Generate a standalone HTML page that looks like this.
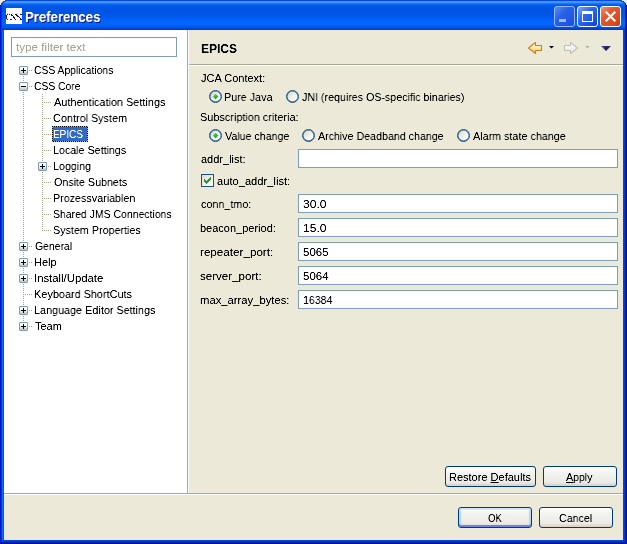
<!DOCTYPE html>
<html><head><meta charset="utf-8">
<style>
*{margin:0;padding:0;box-sizing:border-box}
html,body{width:627px;height:544px;overflow:hidden;background:#ECE9D8}
body{position:relative;font-family:"Liberation Sans",sans-serif;font-size:11px;color:#000}
.a{position:absolute}
.t{position:absolute;white-space:nowrap;line-height:13px;font-size:11px;will-change:transform;filter:url(#dk)}
.t u{text-decoration:underline}
#win{left:0;top:0;width:627px;height:544px;overflow:hidden;background:#0831D9}
#title{left:0;top:0;width:627px;height:30px;background:linear-gradient(180deg,#0A48DC 0px,#0A48DC 1px,#3D95FF 1px,#3D95FF 2px,#3D95FF 2px,#3D95FF 3px,#1478FF 3px,#1478FF 4px,#0466F4 4px,#0466F4 5px,#005AE8 5px,#005AE8 6px,#0057E6 6px,#0057E6 7px,#0055E5 7px,#0055E5 8px,#0055E5 8px,#0055E5 9px,#0055E5 9px,#0055E5 10px,#0055E5 10px,#0055E5 11px,#0055E5 11px,#0055E5 12px,#0055E5 12px,#0055E5 13px,#0055E6 13px,#0055E6 14px,#0056E7 14px,#0056E7 15px,#0057E8 15px,#0057E8 16px,#0058EA 16px,#0058EA 17px,#005AED 17px,#005AED 18px,#005DF2 18px,#005DF2 19px,#0061F8 19px,#0061F8 20px,#0064FC 20px,#0064FC 21px,#0065FF 21px,#0065FF 22px,#0065FF 22px,#0065FF 23px,#0065FF 23px,#0065FF 24px,#0064FD 24px,#0064FD 25px,#0060F8 25px,#0060F8 26px,#0059EE 26px,#0059EE 27px,#0051E4 27px,#0051E4 28px,#0047D8 28px,#0047D8 29px,#003DCA 29px,#003DCA 30px)}
.exp{position:absolute;width:9px;height:9px;border:1px solid #7B9EBD;border-radius:1px;background:linear-gradient(180deg,#fff 0%,#fff 35%,#C9C3AE 100%)}
.exp .h{position:absolute;left:1px;top:3px;width:5px;height:1px;background:#000}
.exp .v{position:absolute;left:3px;top:1px;width:1px;height:5px;background:#000}
.vd{position:absolute;width:1px;background:repeating-linear-gradient(180deg,#A7A38F 0 1px,transparent 1px 2px)}
.hd{position:absolute;height:1px;background:repeating-linear-gradient(90deg,#A7A38F 0 1px,transparent 1px 2px)}
.radio{position:absolute;width:13px;height:13px;border-radius:50%;border:1px solid #1C5180;box-shadow:inset 0 0 0 .4px #1C5180;background:linear-gradient(135deg,#D4D4CC 0%,#F0F0EA 50%,#FFFFFF 100%)}
.radio svg{position:absolute;left:-1px;top:-1px}
.chk{position:absolute;width:13px;height:13px;border:1px solid #1C5180;background:linear-gradient(135deg,#DCDCD7 0%,#FFFFFF 100%)}
.chk svg{position:absolute;left:0;top:0}
.tb{position:absolute;left:298px;width:320px;height:19px;border:1px solid #7F9DB9;background:#fff}
.btn{position:absolute;height:21px;border:1px solid #003C74;border-radius:3px;background:linear-gradient(180deg,#FFFFFF 0%,#F3F3EF 30%,#ECEBE6 80%,#D6D0C5 100%)}
.btn.def{box-shadow:inset 0 2px #CEE7FF,inset 0 -2px #6982EE,inset 2px 0 #B6D7FC,inset -2px 0 #B6D7FC}
</style></head><body>
<svg width="0" height="0" style="position:absolute"><filter id="dk" x="-5%" y="-20%" width="110%" height="140%"><feComponentTransfer><feFuncA type="table" tableValues="0 0.1 0.6 1 1"/></feComponentTransfer></filter></svg>
<div id="win" class="a">
 <div id="title" class="a"></div>
 <div class="a" style="left:0;top:5px;width:1px;height:539px;background:#0019CF"></div>
 <div class="a" style="left:1px;top:3px;width:1px;height:541px;background:#0831D9"></div>
 <div class="a" style="left:2px;top:30px;width:1px;height:514px;background:#166AEE"></div>
 <div class="a" style="left:3px;top:30px;width:1px;height:510px;background:#0855DD"></div>
 <div class="a" style="left:623px;top:30px;width:1px;height:510px;background:#0044EE"></div>
 <div class="a" style="left:624px;top:30px;width:1px;height:511px;background:#003BDA"></div>
 <div class="a" style="left:625px;top:3px;width:1px;height:539px;background:#001EA0"></div>
 <div class="a" style="left:626px;top:5px;width:1px;height:539px;background:#00138C"></div>
 <div class="a" style="left:3px;top:540px;width:620px;height:1px;background:#0046E0"></div>
 <div class="a" style="left:2px;top:541px;width:622px;height:1px;background:#003BDA"></div>
 <div class="a" style="left:1px;top:542px;width:624px;height:1px;background:#001EA0"></div>
 <div class="a" style="left:0;top:543px;width:626px;height:1px;background:#00138C"></div>
 <div class="a" style="left:4px;top:30px;width:619px;height:510px;background:#ECE9D8"></div>
</div>


<!-- rounded corners -->
<div class="a" style="left:0;top:0;width:5px;height:1px;background:#ECE9D8"></div>
<div class="a" style="left:0;top:1px;width:3px;height:1px;background:#ECE9D8"></div>
<div class="a" style="left:0;top:2px;width:2px;height:1px;background:#ECE9D8"></div>
<div class="a" style="left:0;top:3px;width:1px;height:2px;background:#ECE9D8"></div>
<div class="a" style="left:622px;top:0;width:5px;height:1px;background:#ECE9D8"></div>
<div class="a" style="left:624px;top:1px;width:3px;height:1px;background:#ECE9D8"></div>
<div class="a" style="left:625px;top:2px;width:2px;height:1px;background:#ECE9D8"></div>
<div class="a" style="left:626px;top:3px;width:1px;height:2px;background:#ECE9D8"></div>
<div class="a" style="left:3px;top:1px;width:3px;height:1px;background:#0A4ADE"></div>
<div class="a" style="left:2px;top:2px;width:2px;height:1px;background:#0A4ADE"></div>
<div class="a" style="left:1px;top:3px;width:2px;height:1px;background:#0A44DA"></div>
<div class="a" style="left:621px;top:1px;width:3px;height:1px;background:#0A4ADE"></div>
<div class="a" style="left:623px;top:2px;width:2px;height:1px;background:#0A4ADE"></div>
<div class="a" style="left:624px;top:3px;width:2px;height:1px;background:#0A44DA"></div>
<!-- title icon -->
<div class="a" style="left:6px;top:8px;width:16px;height:16px;background:#fff"><svg width="16" height="16" style="position:absolute;left:0;top:0"><g fill="#E4E4EC"><rect x="1" y="5" width="1" height="1"/><rect x="2" y="5" width="1" height="1"/><rect x="3" y="5" width="1" height="1"/><rect x="5" y="5" width="1" height="1"/><rect x="6" y="5" width="1" height="1"/><rect x="7" y="5" width="1" height="1"/><rect x="9" y="5" width="1" height="1"/><rect x="10" y="5" width="1" height="1"/><rect x="11" y="5" width="1" height="1"/><rect x="12" y="5" width="1" height="1"/></g><g fill="#1C1060"><rect x="1" y="6" width="1" height="1"/><rect x="3" y="6" width="1" height="1"/><rect x="5" y="6" width="1" height="1"/><rect x="9" y="6" width="1" height="1"/><rect x="10" y="6" width="1" height="1"/><rect x="14" y="6" width="1" height="1"/><rect x="15" y="6" width="1" height="1"/><rect x="0" y="7" width="1" height="1"/><rect x="5" y="7" width="1" height="1"/><rect x="6" y="7" width="1" height="1"/><rect x="10" y="7" width="1" height="1"/><rect x="11" y="7" width="1" height="1"/><rect x="0" y="8" width="1" height="1"/><rect x="7" y="8" width="1" height="1"/><rect x="11" y="8" width="1" height="1"/><rect x="12" y="8" width="1" height="1"/><rect x="0" y="9" width="1" height="1"/><rect x="7" y="9" width="1" height="1"/><rect x="8" y="9" width="1" height="1"/><rect x="13" y="9" width="1" height="1"/><rect x="0" y="10" width="1" height="1"/><rect x="8" y="10" width="1" height="1"/><rect x="14" y="10" width="1" height="1"/><rect x="1" y="11" width="1" height="1"/><rect x="4" y="11" width="1" height="1"/><rect x="5" y="11" width="1" height="1"/><rect x="9" y="11" width="1" height="1"/><rect x="14" y="11" width="1" height="1"/><rect x="15" y="11" width="1" height="1"/></g></svg></div>
<div class="a" style="left:25px;top:9px;font-size:14px;font-weight:bold;color:#fff;line-height:16px;text-shadow:1px 1px #0A1883;transform:scaleX(0.94);transform-origin:0 0;white-space:nowrap;will-change:transform;filter:url(#dk)">Preferences</div>

<!-- title buttons -->
<div class="a" style="left:554px;top:6px;width:21px;height:21px;border:1px solid #9CB4F0;border-radius:3px;background:linear-gradient(135deg,#5C8CF0,#2660E8 40%,#1A50E0)"></div>
<div class="a" style="left:559px;top:19px;width:7px;height:3px;background:#A7B5F5"></div>
<div class="a" style="left:577px;top:6px;width:21px;height:21px;border:1px solid #fff;border-radius:3px;background:linear-gradient(135deg,#7EA2F8,#2E68F0 40%,#1650E8 80%,#0D3FCC)"></div>
<div class="a" style="left:582px;top:11px;width:11px;height:11px;border:1px solid #fff;border-top-width:3px"></div>
<div class="a" style="left:600px;top:6px;width:21px;height:21px;border:1px solid #fff;border-radius:3px;background:linear-gradient(135deg,#EE9478,#E05A33 35%,#D8491F 80%,#C23A10)"></div>
<svg class="a" style="left:600px;top:6px" width="21" height="21" viewBox="0 0 21 21"><path d="M6.5 6.5 L14.5 14.5 M14.5 6.5 L6.5 14.5" stroke="#fff" stroke-width="2.2" stroke-linecap="square"/></svg>

<!-- left tree pane -->
<div class="a" style="left:4px;top:30px;width:183px;height:463px;background:#fff"></div>
<div class="a" style="left:187px;top:30px;width:1px;height:464px;background:#ACA899"></div>
<div class="a" style="left:188px;top:30px;width:1px;height:463px;background:#fff"></div>
<div class="a" style="left:4px;top:493px;width:619px;height:1px;background:#ACA899"></div>
<div class="a" style="left:4px;top:494px;width:619px;height:1px;background:#fff"></div>
<div class="a" style="left:11px;top:37px;width:166px;height:20px;border:1px solid #7F9DB9;background:#fff"></div>

<!-- tree lines -->
<div class="vd" style="left:23px;top:76px;height:246px"></div>
<div class="vd" style="left:42px;top:94px;height:137px"></div>
<div class="exp" style="left:19px;top:66px"><i class="h"></i><i class="v"></i></div>
<div class="exp" style="left:19px;top:82px"><i class="h"></i></div>
<div class="exp" style="left:19px;top:242px"><i class="h"></i><i class="v"></i></div>
<div class="exp" style="left:19px;top:258px"><i class="h"></i><i class="v"></i></div>
<div class="exp" style="left:19px;top:274px"><i class="h"></i><i class="v"></i></div>
<div class="exp" style="left:19px;top:306px"><i class="h"></i><i class="v"></i></div>
<div class="exp" style="left:19px;top:322px"><i class="h"></i><i class="v"></i></div>
<div class="exp" style="left:38px;top:162px"><i class="h"></i><i class="v"></i></div>
<div class="hd" style="left:29px;top:70px;width:3px"></div>
<div class="hd" style="left:29px;top:86px;width:3px"></div>
<div class="hd" style="left:29px;top:246px;width:3px"></div>
<div class="hd" style="left:29px;top:262px;width:3px"></div>
<div class="hd" style="left:29px;top:278px;width:3px"></div>
<div class="hd" style="left:29px;top:310px;width:3px"></div>
<div class="hd" style="left:29px;top:326px;width:3px"></div>
<div class="hd" style="left:25px;top:294px;width:7px"></div>
<div class="hd" style="left:44px;top:102px;width:7px"></div>
<div class="hd" style="left:44px;top:118px;width:7px"></div>
<div class="hd" style="left:44px;top:134px;width:7px"></div>
<div class="hd" style="left:44px;top:150px;width:7px"></div>
<div class="hd" style="left:48px;top:166px;width:3px"></div>
<div class="hd" style="left:44px;top:182px;width:7px"></div>
<div class="hd" style="left:44px;top:198px;width:7px"></div>
<div class="hd" style="left:44px;top:214px;width:7px"></div>
<div class="hd" style="left:44px;top:230px;width:7px"></div>
<div class="a" style="left:52px;top:126px;width:36px;height:16px;background:#316AC5"></div>
<div class="a" style="left:52px;top:126px;width:36px;height:1px;background:repeating-linear-gradient(90deg,#000 0 1px,#F4A93A 1px 2px)"></div>
<div class="a" style="left:52px;top:141px;width:36px;height:1px;background:repeating-linear-gradient(90deg,#F4A93A 0 1px,#000 1px 2px)"></div>
<div class="a" style="left:52px;top:126px;width:1px;height:16px;background:repeating-linear-gradient(180deg,#000 0 1px,#F4A93A 1px 2px)"></div>
<div class="a" style="left:87px;top:126px;width:1px;height:16px;background:repeating-linear-gradient(180deg,#F4A93A 0 1px,#000 1px 2px)"></div>

<!-- right pane -->
<div class="a" style="left:189px;top:64px;width:434px;height:1px;background:#ACA899"></div>
<div class="a" style="left:189px;top:65px;width:434px;height:1px;background:#fff"></div>
<div class="a" style="left:201px;top:42px;font-size:12px;font-weight:bold;line-height:14px;white-space:nowrap;will-change:transform;filter:url(#dk)">EPICS</div>
<svg class="a" style="left:520px;top:36px" width="100" height="24" viewBox="0 0 100 24">
 <defs>
  <linearGradient id="gy" x1="0" y1="0" x2="0" y2="1"><stop offset="0" stop-color="#FFFBEA"/><stop offset="0.5" stop-color="#FCE6A8"/><stop offset="1" stop-color="#F2C050"/></linearGradient>
  <linearGradient id="gw" x1="0" y1="0" x2="0" y2="1"><stop offset="0" stop-color="#FFFFFF"/><stop offset="1" stop-color="#E4E4DC"/></linearGradient>
  <linearGradient id="gn" x1="0" y1="0" x2="1" y2="0"><stop offset="0" stop-color="#6A5ACD"/><stop offset="0.5" stop-color="#241C58"/><stop offset="1" stop-color="#3A3470"/></linearGradient>
 </defs>
 <path d="M8.5 12 L15.5 6.5 V9.5 H21.5 V14.5 H15.5 V17.5 Z" fill="url(#gy)" stroke="#C4861A" stroke-width="1.1" stroke-linejoin="round"/>
 <path d="M29 10 H34 L31.5 12.5 Z" fill="#000"/>
 <path d="M57.5 12 L50.5 6.5 V9.5 H44.5 V14.5 H50.5 V17.5 Z" fill="url(#gw)" stroke="#C2C2BA" stroke-width="1.1" stroke-linejoin="round"/>
 <path d="M65 10 H70 L67.5 12.5 Z" fill="#B8B8B0"/>
 <path d="M81 10 H91 L86 15 Z" fill="url(#gn)"/>
</svg>
<div class="radio on" style="left:209px;top:90px"><svg width="13" height="13"><defs><linearGradient id="gd" x1="0" y1="0" x2="1" y2="1"><stop offset="0" stop-color="#7AE474"/><stop offset=".5" stop-color="#32B830"/><stop offset="1" stop-color="#118C11"/></linearGradient></defs><path d="M6.5 4.1 L8.9 6.5 L6.5 8.9 L4.1 6.5 Z" fill="url(#gd)" stroke="url(#gd)" stroke-width=".8" stroke-linejoin="round"/></svg></div>
<div class="radio" style="left:286px;top:90px"></div>
<div class="radio on" style="left:209px;top:129px"><svg width="13" height="13"><defs><linearGradient id="gd2" x1="0" y1="0" x2="1" y2="1"><stop offset="0" stop-color="#7AE474"/><stop offset=".5" stop-color="#32B830"/><stop offset="1" stop-color="#118C11"/></linearGradient></defs><path d="M6.5 4.1 L8.9 6.5 L6.5 8.9 L4.1 6.5 Z" fill="url(#gd2)" stroke="url(#gd2)" stroke-width=".8" stroke-linejoin="round"/></svg></div>
<div class="radio" style="left:302px;top:129px"></div>
<div class="radio" style="left:457px;top:129px"></div>
<div class="tb" style="top:149px"></div>
<div class="chk" style="left:201px;top:174px"><svg width="11" height="11" fill="#21A121"><rect x="8" y="2" width="1" height="1"/><rect x="7" y="3" width="1" height="1"/><rect x="8" y="3" width="1" height="1"/><rect x="2" y="4" width="1" height="1"/><rect x="6" y="4" width="1" height="1"/><rect x="7" y="4" width="1" height="1"/><rect x="8" y="4" width="1" height="1"/><rect x="2" y="5" width="1" height="1"/><rect x="3" y="5" width="1" height="1"/><rect x="5" y="5" width="1" height="1"/><rect x="6" y="5" width="1" height="1"/><rect x="7" y="5" width="1" height="1"/><rect x="2" y="6" width="1" height="1"/><rect x="3" y="6" width="1" height="1"/><rect x="4" y="6" width="1" height="1"/><rect x="5" y="6" width="1" height="1"/><rect x="6" y="6" width="1" height="1"/><rect x="3" y="7" width="1" height="1"/><rect x="4" y="7" width="1" height="1"/><rect x="5" y="7" width="1" height="1"/><rect x="4" y="8" width="1" height="1"/></svg></div>
<div class="tb" style="top:194px"></div>
<div class="tb" style="top:218px"></div>
<div class="tb" style="top:242px"></div>
<div class="tb" style="top:266px"></div>
<div class="tb" style="top:290px"></div>
<div class="btn" style="left:445px;top:466px;width:91px"></div>
<div class="btn" style="left:543px;top:466px;width:74px"></div>
<div class="btn def" style="left:458px;top:507px;width:74px"></div>
<div class="btn" style="left:539px;top:507px;width:74px"></div>

<div class="t" style="left:34.06px;top:64px;transform:scaleX(0.9398);transform-origin:0 0;">CSS Applications</div>
<div class="t" style="left:34.06px;top:80px;transform:scaleX(0.9375);transform-origin:0 0;">CSS Core</div>
<div class="t" style="left:54.00px;top:96px;transform:scaleX(0.9911);transform-origin:0 0;">Authentication Settings</div>
<div class="t" style="left:53.01px;top:112px;transform:scaleX(0.9865);transform-origin:0 0;">Control System</div>
<div class="t" style="left:53.09px;top:128px;transform:scaleX(0.9062);transform-origin:0 0;color:#fff">EPICS</div>
<div class="t" style="left:53.03px;top:144px;transform:scaleX(0.9730);transform-origin:0 0;">Locale Settings</div>
<div class="t" style="left:53.03px;top:160px;transform:scaleX(0.9737);transform-origin:0 0;">Logging</div>
<div class="t" style="left:54.00px;top:176px;transform:scaleX(0.9733);transform-origin:0 0;">Onsite Subnets</div>
<div class="t" style="left:53.02px;top:192px;transform:scaleX(0.9759);transform-origin:0 0;">Prozessvariablen</div>
<div class="t" style="left:53.05px;top:208px;transform:scaleX(0.9516);transform-origin:0 0;">Shared JMS Connections</div>
<div class="t" style="left:53.02px;top:224px;transform:scaleX(0.9775);transform-origin:0 0;">System Properties</div>
<div class="t" style="left:35.00px;top:240px;transform:scaleX(0.9487);transform-origin:0 0;">General</div>
<div class="t" style="left:34.00px;top:256px;">Help</div>
<div class="t" style="left:33.97px;top:272px;transform:scaleX(1.0303);transform-origin:0 0;">Install/Update</div>
<div class="t" style="left:34.01px;top:288px;transform:scaleX(0.9898);transform-origin:0 0;">Keyboard ShortCuts</div>
<div class="t" style="left:34.02px;top:304px;transform:scaleX(0.9836);transform-origin:0 0;">Language Editor Settings</div>
<div class="t" style="left:35.00px;top:320px;">Team</div>
<div class="t" style="left:16.00px;top:41px;transform:scaleX(1.0615);transform-origin:0 0;color:#ACA899">type filter text</div>
<div class="t" style="left:201.00px;top:72px;">JCA Context:</div>
<div class="t" style="left:224.02px;top:91px;transform:scaleX(0.9796);transform-origin:0 0;">Pure Java</div>
<div class="t" style="left:302.00px;top:91px;transform:scaleX(0.9701);transform-origin:0 0;">JNI (requires OS-specific binaries)</div>
<div class="t" style="left:200.01px;top:111px;transform:scaleX(0.9898);transform-origin:0 0;">Subscription criteria:</div>
<div class="t" style="left:225.00px;top:130px;transform:scaleX(0.9697);transform-origin:0 0;">Value change</div>
<div class="t" style="left:318.00px;top:130px;transform:scaleX(0.9690);transform-origin:0 0;">Archive Deadband change</div>
<div class="t" style="left:473.00px;top:130px;transform:scaleX(0.9789);transform-origin:0 0;">Alarm state change</div>
<div class="t" style="left:201.00px;top:153px;">addr_list:</div>
<div class="t" style="left:217.00px;top:175px;transform:scaleX(1.0141);transform-origin:0 0;">auto_addr_list:</div>
<div class="t" style="left:201.00px;top:198px;transform:scaleX(0.9804);transform-origin:0 0;">conn_tmo:</div>
<div class="t" style="left:302.90px;top:198px;transform:scaleX(1.1000);transform-origin:0 0;">30.0</div>
<div class="t" style="left:200.00px;top:222px;">beacon_period:</div>
<div class="t" style="left:302.90px;top:222px;transform:scaleX(1.1000);transform-origin:0 0;">15.0</div>
<div class="t" style="left:199.94px;top:246px;transform:scaleX(1.0597);transform-origin:0 0;">repeater_port:</div>
<div class="t" style="left:302.96px;top:246px;transform:scaleX(1.0435);transform-origin:0 0;">5065</div>
<div class="t" style="left:199.95px;top:270px;transform:scaleX(1.0526);transform-origin:0 0;">server_port:</div>
<div class="t" style="left:302.96px;top:270px;transform:scaleX(1.0435);transform-origin:0 0;">5064</div>
<div class="t" style="left:199.98px;top:294px;transform:scaleX(1.0233);transform-origin:0 0;">max_array_bytes:</div>
<div class="t" style="left:303.03px;top:294px;transform:scaleX(0.9667);transform-origin:0 0;">16384</div>
<div class="t" style="left:449.00px;top:471px;">Restore <u>D</u>efaults</div>
<div class="t" style="left:566.00px;top:471px;transform:scaleX(0.9643);transform-origin:0 0;"><u>A</u>pply</div>
<div class="t" style="left:488.00px;top:512px;transform:scaleX(0.8750);transform-origin:0 0;">OK</div>
<div class="t" style="left:559.03px;top:512px;transform:scaleX(0.9697);transform-origin:0 0;">Cancel</div>
</body></html>
